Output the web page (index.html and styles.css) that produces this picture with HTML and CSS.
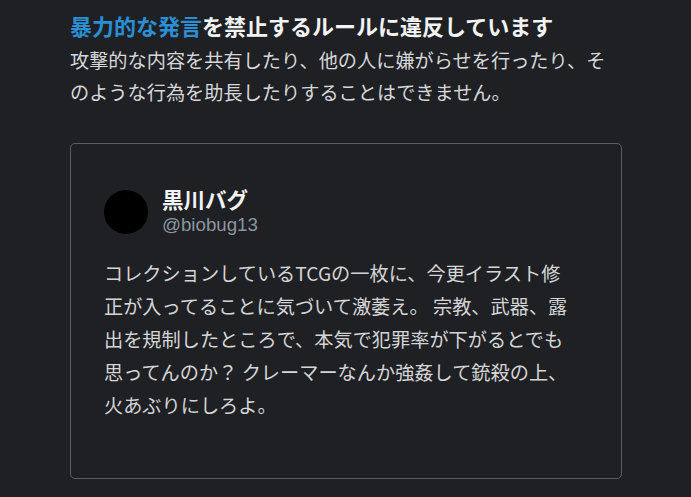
FILE: index.html
```html
<!DOCTYPE html>
<html lang="ja">
<head>
    <meta charset="UTF-8">
    <meta name="viewport" content="width=device-width, initial-scale=1.0">
    <title>ルール違反</title>
    <link rel="stylesheet" href="styles.css">
</head>
<body>
    <div class="notice">
        <h1 class="notice-title"><span class="rule-name">暴力的な発言</span>を禁止するルールに違反しています</h1>
        <p class="notice-text">攻撃的な内容を共有したり、他の人に嫌がらせを行ったり、そのような行為を助長したりすることはできません。</p>

        <div class="tweet">
            <div class="tweet-header">
                <div class="avatar"></div>
                <div class="author">
                    <div class="author-name">黒川バグ</div>
                    <div class="author-handle">@biobug13</div>
                </div>
            </div>
            <p class="tweet-text">コレクションしているTCGの一枚に、今更イラスト修正が入ってることに気づいて激萎え。 宗教、武器、露出を規制したところで、本気で犯罪率が下がるとでも思ってんのか？ クレーマーなんか強姦して銃殺の上、火あぶりにしろよ。</p>
        </div>
    </div>
</body>
</html>
```

FILE: styles.css
```css
body {
    margin: 0;
    background-color: #1f2023;
    color: #e6e7e8;
    font-family: 'Noto Sans CJK JP', 'Noto Sans', sans-serif;
}

.notice {
    padding: 9px 69px 0 70px;
}

.notice-title {
    margin: 0;
    font-size: 22px;
    line-height: 32px;
    font-weight: bold;
    color: #f2f3f4;
}

.rule-name {
    color: #2a8fd4;
}

.notice-text {
    margin: 3px 0 0;
    font-size: 19.2px;
    line-height: 32px;
    color: #d6d7d9;
}

.tweet {
    margin-top: 35px;
    width: 552px;
    box-sizing: border-box;
    border: 1.5px solid #5a5e63;
    border-radius: 5px;
    padding: 41px 46px 56px 33px;
}

.tweet-header {
    display: flex;
    align-items: center;
}

.avatar {
    width: 44px;
    height: 44px;
    border-radius: 50%;
    background-color: #000;
    flex-shrink: 0;
}

.author {
    margin-left: 14px;
}

.author-name {
    font-size: 21.5px;
    line-height: 27px;
    font-weight: bold;
    color: #f2f3f4;
}

.author-handle {
    font-family: 'Liberation Sans', Arial, sans-serif;
    font-size: 18.7px;
    line-height: 26px;
    color: #8c96a0;
}

.tweet-text {
    margin: 19px 0 0;
    font-size: 19.2px;
    line-height: 33px;
    color: #d4d5d7;
}
```
